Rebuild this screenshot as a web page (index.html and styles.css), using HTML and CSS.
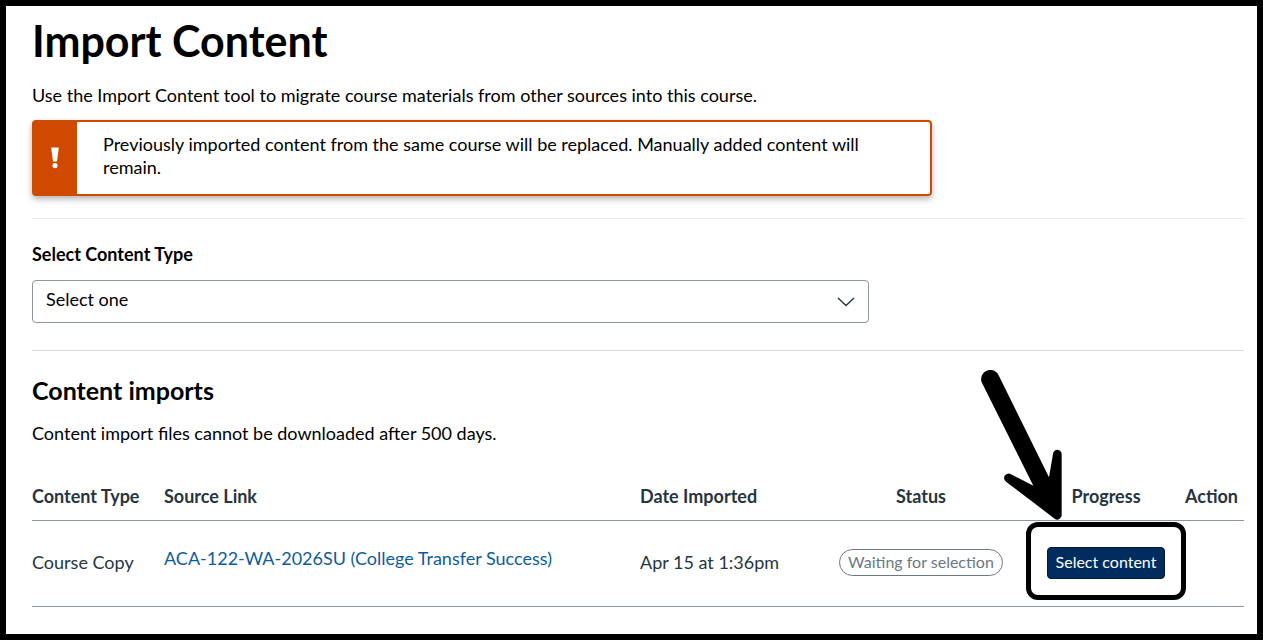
FILE: index.html
```html
<!DOCTYPE html>
<html lang="en">
<head>
  <meta charset="UTF-8" />
  <meta name="viewport" content="width=device-width, initial-scale=1.0"/>
  <title>Import Content</title>
  <link rel="stylesheet" href="styles.css">
</head>
<body>

  <main class="page">
    <h1>Import Content</h1>
    <p class="intro">Use the Import Content tool to migrate course materials from other sources into this course.</p>

    <!-- Warning -->
    <div class="alert" role="alert">
      <div class="alert-icon">
        <svg width="8" height="22" viewBox="0 0 8 22" aria-hidden="true">
          <path d="M0.2 0.6h7.6L6 14.6H2z" fill="#fff"/>
          <circle cx="4" cy="18.6" r="2.6" fill="#fff"/>
        </svg>
      </div>
      <p class="alert-text">Previously imported content from the same course will be replaced. Manually added content will remain.</p>
    </div>

    <!-- Content type -->
    <form class="type-form">
      <label for="contentType">Select Content Type</label>
      <div class="select-wrap">
        <select id="contentType">
          <option>Select one</option>
        </select>
        <svg class="chevron" width="18" height="10" viewBox="0 0 18 10" aria-hidden="true">
          <path d="M1 1l8 7.6L17 1" fill="none" stroke="#273540" stroke-width="1.4"/>
        </svg>
      </div>
    </form>

    <!-- Imports -->
    <section class="imports">
      <h2>Content imports</h2>
      <p class="note">Content import files cannot be downloaded after 500 days.</p>

      <table>
        <thead>
          <tr>
            <th class="col-type">Content Type</th>
            <th class="col-source">Source Link</th>
            <th class="col-date">Date Imported</th>
            <th class="col-status">Status</th>
            <th class="col-progress">Progress</th>
            <th class="col-action">Action</th>
          </tr>
        </thead>
        <tbody>
          <tr>
            <td>Course Copy</td>
            <td class="source"><a href="#">ACA-122-WA-2026SU (College Transfer Success)</a></td>
            <td>Apr 15 at 1:36pm</td>
            <td class="col-status"><span class="pill">Waiting for selection</span></td>
            <td class="col-progress">
              <div class="callout">
                <button type="button">Select content</button>
                <span class="callout-ring"></span>
                <svg class="callout-arrow" width="81" height="150" viewBox="90 60 243 450" aria-hidden="true">
                  <path d="M92 97A27 27 0 0 1 144 78L294 382L306 312A13 13 0 0 1 332 313V495A13 13 0 0 1 311 506L165 395A13 13 0 0 1 180 373L247 407Z"/>
                </svg>
              </div>
            </td>
            <td></td>
          </tr>
        </tbody>
      </table>
    </section>
  </main>

</body>
</html>
```

FILE: styles.css
```css
* {
  margin: 0;
  padding: 0;
  box-sizing: border-box;
}

body {
  font-family: Lato, sans-serif;
  font-size: 18px;
  line-height: 24px;
  background: #fff;
  color: #000;
}

.page {
  min-height: 100vh;
  border: 6px solid #000;
  padding: 8px 13px 24px 26px;
}

h1 {
  font-size: 43px;
  line-height: 54px;
  font-weight: 700;
}

.intro {
  margin-top: 15px;
}

.alert {
  display: flex;
  max-width: 900px;
  margin-top: 13px;
  border: 2px solid #cf4a00;
  border-radius: 4px;
  box-shadow: 0 3px 6px rgba(0, 0, 0, 0.3);
}

.alert-icon {
  display: flex;
  align-items: center;
  justify-content: center;
  width: 43px;
  padding-right: 2px;
  background: #cf4a00;
}

.alert-text {
  flex: 1;
  padding: 11px 52px 15px 26px;
  line-height: 23px;
}

.type-form {
  margin-top: 22px;
  padding: 23px 0 27px;
  border-top: 1px solid #e8eaec;
  border-bottom: 1px solid #d7dade;
}

label {
  display: block;
  font-weight: 700;
}

.select-wrap {
  position: relative;
  max-width: 837px;
  margin-top: 14px;
}

select {
  display: block;
  width: 100%;
  height: 43px;
  padding: 0 40px 6px 13px;
  appearance: none;
  font: inherit;
  color: #000;
  background: #fff;
  border: 1px solid #8d959f;
  border-radius: 4px;
}

.chevron {
  position: absolute;
  top: 17px;
  right: 14px;
  pointer-events: none;
}

.imports {
  padding-top: 23px;
}

h2 {
  font-size: 25px;
  line-height: 32px;
  font-weight: 700;
}

.note {
  margin-top: 15px;
}

table {
  width: 100%;
  margin-top: 28px;
  border-collapse: collapse;
  table-layout: fixed;
  color: #273540;
}

th,
td {
  text-align: left;
  border-bottom: 1px solid #8d959f;
}

th {
  padding: 11px 0 12px;
  font-weight: 700;
}

td {
  height: 86px;
  padding-bottom: 4px;
  vertical-align: middle;
}

.col-type {
  width: 132px;
}

.col-date {
  width: 164px;
}

.col-status {
  width: 234px;
  text-align: center;
}

.col-progress {
  width: 136px;
  text-align: center;
}

.col-action {
  width: 70px;
  padding-left: 11px;
}

td.col-status,
td.col-progress {
  padding-bottom: 2px;
}

.source {
  padding-bottom: 11px;
}

a {
  color: #0e5c9c;
  text-decoration: none;
}

.pill {
  display: inline-block;
  padding: 0 8px 1px;
  font-size: 16px;
  color: #6a7883;
  border: 1px solid #6a7883;
  border-radius: 14px;
}

.callout {
  position: relative;
  display: inline-block;
}

button {
  display: block;
  height: 32px;
  padding: 0 8px 2px;
  font-family: inherit;
  font-size: 16px;
  color: #fff;
  background: #002d5e;
  border: 1px solid #001c3a;
  border-radius: 4px;
  cursor: pointer;
}

/* marker drawn around the button */
.callout-ring {
  position: absolute;
  top: -25px;
  right: -21px;
  bottom: -21px;
  left: -21px;
  border: 5px solid #000;
  border-radius: 12px;
  pointer-events: none;
}

.callout-arrow {
  position: absolute;
  top: -177px;
  left: -66px;
  pointer-events: none;
}
```
